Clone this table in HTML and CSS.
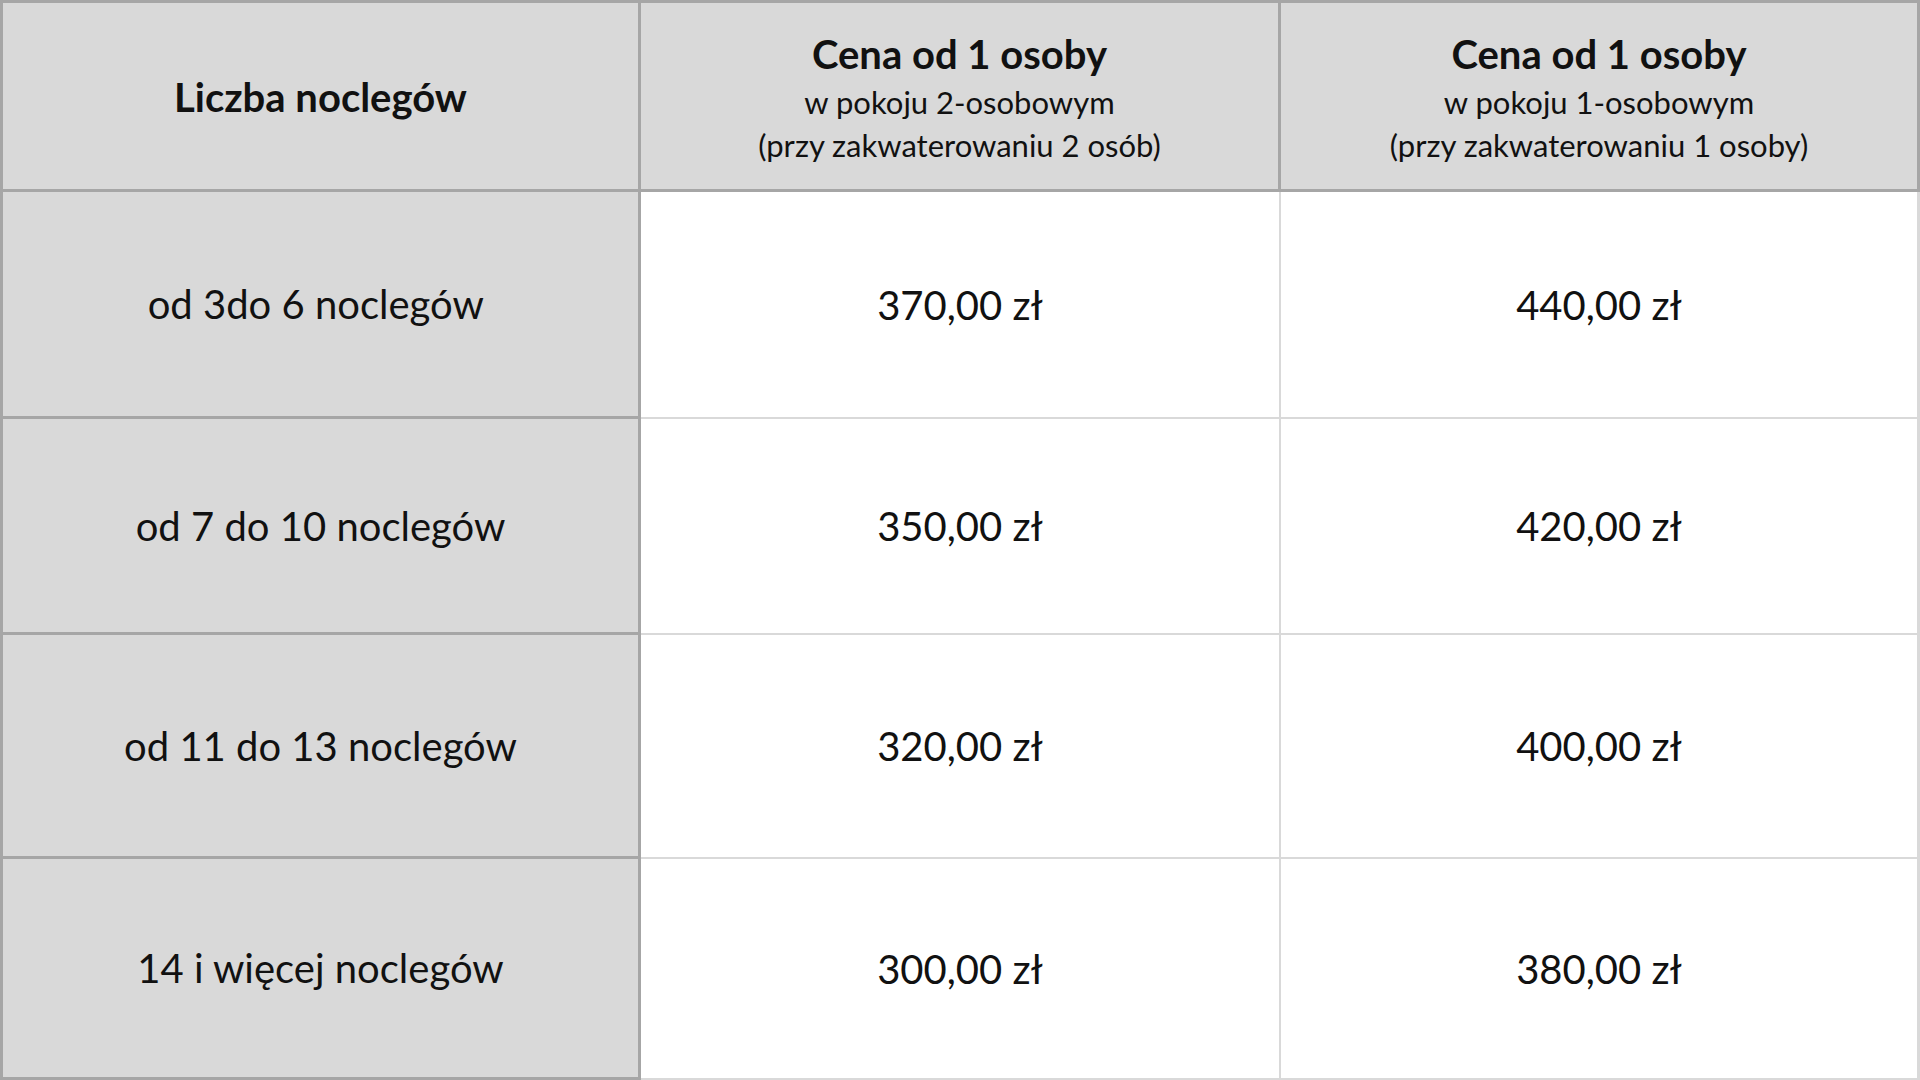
FILE: index.html
```html
<!DOCTYPE html>
<html lang="pl">
<head>
<meta charset="utf-8">
<title>Cennik</title>
<link rel="stylesheet" href="styles.css">
</head>
<body>
<div class="table">
  <div class="cell head"><div class="title">Liczba noclegów</div></div>
  <div class="cell head">
    <div class="title">Cena od 1 osoby</div>
    <div class="sub">w pokoju 2-osobowym</div>
    <div class="sub">(przy zakwaterowaniu 2 osób)</div>
  </div>
  <div class="cell head">
    <div class="title">Cena od 1 osoby</div>
    <div class="sub">w pokoju 1-osobowym</div>
    <div class="sub">(przy zakwaterowaniu 1 osoby)</div>
  </div>

  <div class="cell label">od 3do 6 noclegów&nbsp;</div>
  <div class="cell price">370,00 zł</div>
  <div class="cell price">440,00 zł</div>

  <div class="cell label">od 7 do 10 noclegów</div>
  <div class="cell price">350,00 zł</div>
  <div class="cell price">420,00 zł</div>

  <div class="cell label">od 11 do 13 noclegów</div>
  <div class="cell price">320,00 zł</div>
  <div class="cell price">400,00 zł</div>

  <div class="cell label">14 i więcej noclegów</div>
  <div class="cell price">300,00 zł</div>
  <div class="cell price">380,00 zł</div>
</div>
</body>
</html>
```
FILE: styles.css
```css
* { box-sizing: border-box; }
html, body { margin: 0; padding: 0; background: #fff; }
body {
  font-family: Lato, "Noto Sans", sans-serif;
  color: #111;
}
.table {
  width: 1920px;
  height: 1080px;
  display: grid;
  grid-template-columns: 638px 640px 639px;
  grid-template-rows: 189px 227px 216px 224px 221px;
  border-top: 3px solid #a6a6a6;
  border-left: 3px solid #a6a6a6;
}
.cell {
  display: flex;
  flex-direction: column;
  align-items: center;
  justify-content: center;
  text-align: center;
  border-right: 2px solid #d9d9d9;
  border-bottom: 2px solid #d9d9d9;
  background: #fff;
}
.head, .label {
  background: #d9d9d9;
  border-right: 3px solid #a6a6a6;
  border-bottom: 3px solid #a6a6a6;
}
.head { padding-top: 1px; }
.price:nth-child(3n) { border-right-width: 3px; }
.title {
  font-weight: 700;
  font-size: 40px;
  line-height: 54px;
}
.sub {
  font-size: 31px;
  line-height: 43px;
}
.label, .price {
  font-size: 40px;
  line-height: 48px;
  white-space: pre;
}
```
